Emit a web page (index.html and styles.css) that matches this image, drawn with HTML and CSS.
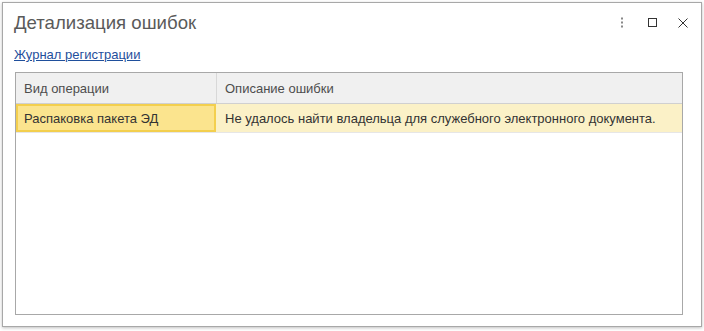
FILE: index.html
```html
<!DOCTYPE html>
<html lang="ru">
<head>
<meta charset="utf-8">
<link rel="stylesheet" href="styles.css">
</head>
<body>
<div class="window">
  <div class="titlebar">
    <div class="title">Детализация ошибок</div>
    <div class="controls">
      <svg class="ico" width="12" height="12" viewBox="0 0 12 12"><rect x="5" y="0.5" width="2" height="2" fill="#888"/><rect x="5" y="4.5" width="2" height="2" fill="#888"/><rect x="5" y="8.5" width="2" height="2" fill="#888"/></svg>
      <svg class="ico" width="12" height="12" viewBox="0 0 12 12"><rect x="1.5" y="1.5" width="8" height="8" fill="none" stroke="#333" stroke-width="1"/></svg>
      <svg class="ico" width="12" height="12" viewBox="0 0 12 12"><path d="M1.5 1.5 L10.5 10.5 M10.5 1.5 L1.5 10.5" stroke="#333" stroke-width="1" fill="none"/></svg>
    </div>
  </div>
  <div class="linkrow"><a class="link" href="#">Журнал регистрации</a></div>
  <div class="table">
    <div class="thead">
      <div class="th c1">Вид операции</div>
      <div class="th c2">Описание ошибки</div>
    </div>
    <div class="tr">
      <div class="td c1 sel">Распаковка пакета ЭД</div>
      <div class="td c2">Не удалось найти владельца для служебного электронного документа.</div>
    </div>
  </div>
</div>
</body>
</html>
```
FILE: styles.css
```css
html, body { margin: 0; padding: 0; background: #fff; }
body { font-family: "Liberation Sans", Arial, sans-serif; width: 704px; height: 331px; overflow: hidden; }
.window {
  margin: 2px 0 0 2px;
  width: 698px;
  height: 323px;
  border: 1px solid #a8a8a8;
  box-shadow: 0 1px 3px rgba(0,0,0,0.25);
  display: flex;
  flex-direction: column;
  background: #fff;
}
.titlebar { height: 39px; display: flex; align-items: center; justify-content: space-between; padding: 0 12px 0 11px; }
.title { font-size: 18.6px; color: #5a5a5a; }
.controls { display: flex; gap: 18px; align-items: center; }
.controls .ico:first-child { margin-right: 1px; }
.ico { display: block; }
.linkrow { height: 26px; padding: 4px 0 0 11px; line-height: 15px; }
.link { font-size: 13px; color: #1f4f9c; text-decoration: underline; }
.table {
  flex: 1;
  margin: 0 18px 11px 12px;
  border: 1px solid #a8a8a8;
  display: flex;
  flex-direction: column;
  font-size: 13px;
  color: #4d4d4d;
}
.thead { display: flex; height: 30px; background: #f0f0f0; border-bottom: 1px solid #d0d0d0; }
.th { display: flex; align-items: center; padding-left: 8px; }
.th.c1 { width: 192px; border-right: 1px solid #d8d8d8; }
.tr { display: flex; height: 28px; background: #fbf1c7; border-bottom: 1px solid #e6e6e6; }
.td { display: flex; align-items: center; padding-left: 8px; color: #333; }
.td.c1 { width: 192px; }
.td.c2 { padding-left: 9px; }
.td.sel { background: #fbe48e; border: 2px solid #f3cf4e; width: 190px; padding-left: 6px; }
```
